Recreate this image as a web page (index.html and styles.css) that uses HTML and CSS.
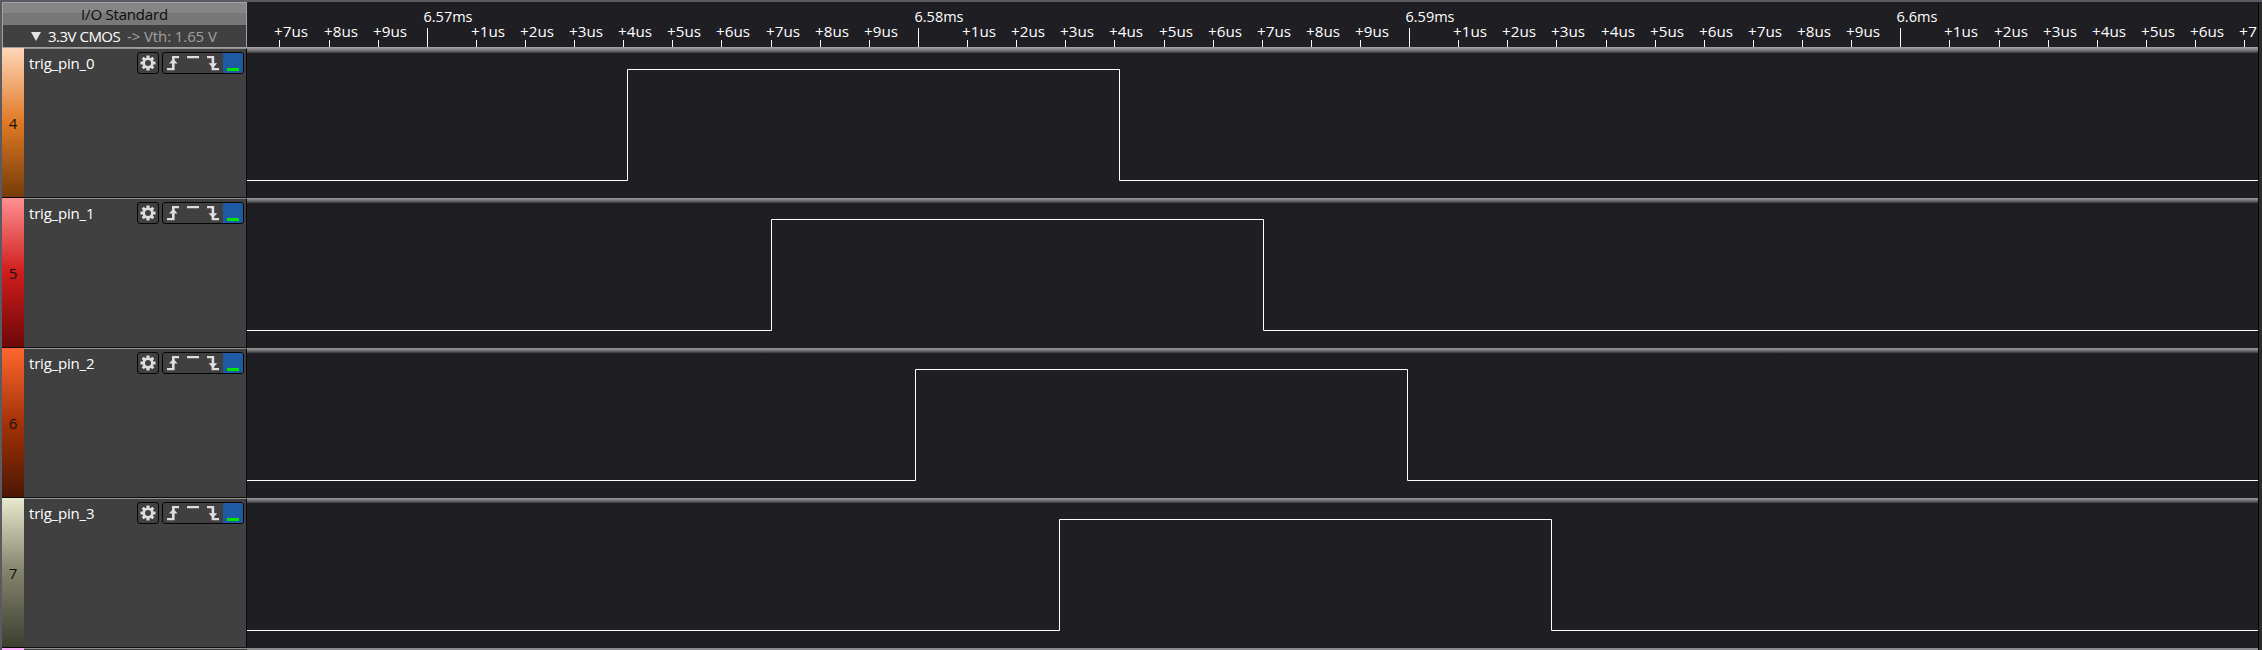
FILE: index.html
```
<!DOCTYPE html>
<html lang="en">
<head>
<meta charset="utf-8">
<title>Logic analyzer</title>
<link rel="stylesheet" href="styles.css">
</head>
<body>
<div class="app">
  <header class="top">
    <div class="standard">
      <div class="standard-title"><span>I/O Standard</span></div>
      <div class="standard-value">
        <svg class="caret" width="10" height="9"><path d="M0 0H10L5 9Z"/></svg>
        <span class="cmos">3.3V CMOS</span><span class="vth">-&gt; Vth: 1.65 V</span>
      </div>
    </div>
    <svg class="ruler" id="ruler" width="2011" height="45"></svg>
  </header>
  <main id="channels"></main>
  <div class="next"><i class="next-color"></i><i class="next-panel"></i><i class="next-wave"></i></div>
  <i class="scroll-edge"></i>
</div>
<template id="channel">
  <section class="channel">
    <div class="index"></div>
    <div class="panel">
      <span class="name"></span>
      <span class="gear"><svg width="22" height="22" viewBox="0 0 22 22"><g transform="translate(11 11)"><circle r="4.3" fill="none" stroke="#dedede" stroke-width="2.6"/><g fill="#dedede"><path d="M-1.6-7.5H1.6V-4.5H-1.6ZM-1.6 4.5H1.6V7.5H-1.6ZM-7.5-1.6H-4.5V1.6H-7.5ZM4.5-1.6H7.5V1.6H4.5Z"/><path transform="rotate(45)" d="M-1.5-7.5H1.5V-4.5H-1.5ZM-1.5 4.5H1.5V7.5H-1.5ZM-7.5-1.5H-4.5V1.5H-7.5ZM4.5-1.5H7.5V1.5H4.5Z"/></g></g></svg></span>
      <span class="triggers"><svg width="80" height="20" viewBox="0 0 80 20">
        <rect x="60" width="20" height="20" fill="#1f5ba5"/>
        <g fill="#dedede"><path d="M4 15H9V3H16V5.2H11.6V17.2H4Z"/><path d="M24 3H36V5.2H24Z"/><path d="M44 3H51.2V15H56V17.2H48.6V5.2H44Z"/><path d="M10.3 5.8L14.6 10.6H6ZM49.9 15L54.2 10.2H45.6Z"/></g>
        <rect x="64" y="15" width="12" height="3" fill="#00e600"/>
      </svg></span>
    </div>
    <svg class="wave" width="2011" height="150"><path/></svg>
  </section>
</template>
<script src="app.js"></script>
</body>
</html>
```
FILE: styles.css
```
* { box-sizing: border-box; }
body { margin: 0; background: #1f1e23; font-family: "Open Sans", "Noto Sans", sans-serif; font-size: 15px; color: #fff; overflow: hidden; }
svg { display: block; flex: none; }
.app { position: relative; width: 2262px; height: 650px; overflow: hidden; border-top: 2px solid #585c62; border-left: 2px solid #585c62; }
.top { display: flex; height: 46px; border-bottom: 1px solid #a2a2a2; }
.standard { width: 245px; height: 45px; border: 1px solid #a2a2a2; border-bottom: 0; background: #404040; flex: none; }
.standard-title { height: 22px; line-height: 23px; text-align: center; letter-spacing: -0.2px; color: #0c0c0c; background: linear-gradient(#868686 0 10px, #787878 10px); }
.standard-value { display: flex; align-items: center; height: 22px; padding-left: 28px; line-height: 22px; }
.caret { fill: #e4e4e4; }
.cmos { width: 73px; margin-left: 7px; letter-spacing: -0.5px; white-space: nowrap; }
.vth { margin-left: 6px; color: #a0a0a0; letter-spacing: -0.1px; white-space: nowrap; }
.ruler text { fill: #fff; font-size: 15px; }
.ruler path { stroke: #fff; fill: none; }
.channel { display: flex; height: 150px; }
.index { width: 22px; height: 150px; display: flex; align-items: center; justify-content: center; color: #111; border-bottom: 1px solid #0b0b0b; flex: none; }
.panel { width: 223px; display: flex; align-items: flex-start; background: #404040; border-top: 1px solid #929292; border-bottom: 1px solid #111; border-right: 1px solid #080808; padding: 3px 2px 0 5px; flex: none; }
.name { width: 108px; line-height: 23px; letter-spacing: -0.2px; white-space: nowrap; }
.gear, .triggers { height: 22px; border: 1px solid #050505; border-radius: 3px; overflow: hidden; flex: none; }
.gear { width: 22px; }
.gear svg { margin: -1px; }
.triggers { width: 82px; margin-left: 3px; }
.wave { background: linear-gradient(#929294 1px, #7c7c7e 2px, #3b3b3e 5px, #1f1e23 5px); }
.wave path { fill: none; stroke: #fff; }
.orange .index { background: linear-gradient(#ffd6b8, #df7926 50%, #763b08); }
.red .index { background: linear-gradient(#ff9090, #d01c1c 50%, #6d0808); }
.rust .index { background: linear-gradient(#ff672e, #a43208 50%, #4c1702); }
.olive .index { background: linear-gradient(#e9e9cd, #82826b 50%, #3e3e31); }
.next { display: flex; height: 2px; }
.next-color { width: 22px; background: #ffacff; }
.next-panel { width: 223px; background: #404040; border-top: 1px solid #929292; }
.next-wave { flex: 1; background: #8b8b8d; }
.scroll-edge { position: absolute; top: 0; right: 0; width: 4px; height: 650px; background: #2c2c2c; border-left: 1px solid #050505; }
```
FILE: app.js
```
const NS = 'http://www.w3.org/2000/svg';
const ORIGIN = 247;
const ruler = document.getElementById('ruler');
const ticks = [279,329,378,427,476,525,574,623,672,721,771,820,869,918,967,1016,1065,1114,1164,1213,1262,1311,1360,1409,1458,1507,1556,1606,1655,1704,1753,1802,1851,1900,1949,1999,2048,2097,2146,2195,2244];
const majors = ['6.57ms', '6.58ms', '6.59ms', '6.6ms'];
let marks = '';
function label(x, y, text, width) {
  const el = document.createElementNS(NS, 'text');
  el.setAttribute('x', x);
  el.setAttribute('y', y);
  el.setAttribute('textLength', width);
  el.setAttribute('lengthAdjust', 'spacingAndGlyphs');
  el.textContent = text;
  ruler.append(el);
}
ticks.forEach((tick, i) => {
  const unit = (i + 7) % 10;
  const x = tick - ORIGIN;
  marks += `M${x + .5} ${unit ? 38 : 26}V45`;
  if (unit) {
    // The last label only has room for its number.
    const last = i === ticks.length - 1;
    label(x - 5, 35, last ? `+${unit}` : `+${unit}us`, last ? 18 : 34);
  } else {
    const text = majors[(i - 3) / 10];
    label(x - 3.5, 20, text, text.length === 6 ? 49 : 41);
  }
});
const path = document.createElementNS(NS, 'path');
path.setAttribute('d', marks);
ruler.append(path);

const channels = [
  { index: 4, color: 'orange', rise: 627 },
  { index: 5, color: 'red', rise: 771 },
  { index: 6, color: 'rust', rise: 915 },
  { index: 7, color: 'olive', rise: 1059 },
];
channels.forEach((c, i) => {
  const row = document.getElementById('channel').content.cloneNode(true);
  row.querySelector('.channel').classList.add(c.color);
  row.querySelector('.index').textContent = c.index;
  row.querySelector('.name').textContent = 'trig_pin_' + i;
  const r = c.rise - ORIGIN + .5;
  row.querySelector('.wave path').setAttribute('d', `M0 132.5H${r}V21.5H${r + 492}V132.5H2011`);
  document.getElementById('channels').append(row);
});
```
